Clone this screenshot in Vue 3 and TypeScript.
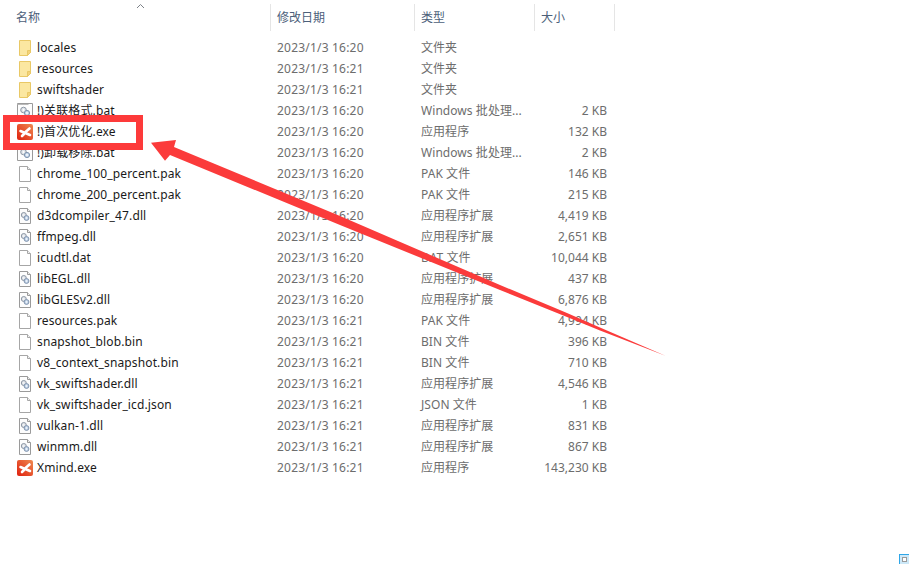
<script setup lang="ts">
type Kind = 'folder' | 'gear' | 'bat' | 'file' | 'xmind'
interface Row { name: string; date: string; type: string; size: string; kind: Kind }
const d0 = '2023/1/3 16:20'
const d1 = '2023/1/3 16:21'
const ext = '应用程序扩展'
const rows: Row[] = [
  { name: 'locales', date: d0, type: '文件夹', size: '', kind: 'folder' },
  { name: 'resources', date: d1, type: '文件夹', size: '', kind: 'folder' },
  { name: 'swiftshader', date: d1, type: '文件夹', size: '', kind: 'folder' },
  { name: '!)关联格式.bat', date: d0, type: 'Windows 批处理...', size: '2 KB', kind: 'bat' },
  { name: '!)首次优化.exe', date: d0, type: '应用程序', size: '132 KB', kind: 'xmind' },
  { name: '!)卸载移除.bat', date: d0, type: 'Windows 批处理...', size: '2 KB', kind: 'bat' },
  { name: 'chrome_100_percent.pak', date: d0, type: 'PAK 文件', size: '146 KB', kind: 'file' },
  { name: 'chrome_200_percent.pak', date: d0, type: 'PAK 文件', size: '215 KB', kind: 'file' },
  { name: 'd3dcompiler_47.dll', date: d0, type: ext, size: '4,419 KB', kind: 'gear' },
  { name: 'ffmpeg.dll', date: d0, type: ext, size: '2,651 KB', kind: 'gear' },
  { name: 'icudtl.dat', date: d0, type: 'DAT 文件', size: '10,044 KB', kind: 'file' },
  { name: 'libEGL.dll', date: d0, type: ext, size: '437 KB', kind: 'gear' },
  { name: 'libGLESv2.dll', date: d0, type: ext, size: '6,876 KB', kind: 'gear' },
  { name: 'resources.pak', date: d1, type: 'PAK 文件', size: '4,994 KB', kind: 'file' },
  { name: 'snapshot_blob.bin', date: d1, type: 'BIN 文件', size: '396 KB', kind: 'file' },
  { name: 'v8_context_snapshot.bin', date: d1, type: 'BIN 文件', size: '710 KB', kind: 'file' },
  { name: 'vk_swiftshader.dll', date: d1, type: ext, size: '4,546 KB', kind: 'gear' },
  { name: 'vk_swiftshader_icd.json', date: d1, type: 'JSON 文件', size: '1 KB', kind: 'file' },
  { name: 'vulkan-1.dll', date: d1, type: ext, size: '831 KB', kind: 'gear' },
  { name: 'winmm.dll', date: d1, type: ext, size: '867 KB', kind: 'gear' },
  { name: 'Xmind.exe', date: d1, type: '应用程序', size: '143,230 KB', kind: 'xmind' },
]
</script>

<template>
  <div class="explorer">
    <svg class="chevron" width="9" height="6" viewBox="0 0 9 6"><path d="M1 5 4.500 1.500 8 5" fill="none" stroke="#7c8187" stroke-width="1"/></svg>
    <div class="head">
      <div class="hcell first">名称</div>
      <div class="hcell">修改日期</div>
      <div class="hcell">类型</div>
      <div class="hcell">大小</div>
    </div>
    <div v-for="r in rows" :key="r.name" class="row">
      <div class="name">
        <svg class="icon" width="17" height="18" viewBox="0 0 17 18">
          <template v-if="r.kind === 'folder'">
            <path d="M2.500 1.500h11v12l-3 3h-8z" fill="#fbe7a1" stroke="#e9c866"/>
            <path d="M10.500 16.500v-5h3v2z" fill="#f3d27a" stroke="#e9c866"/>
          </template>
          <template v-else-if="r.kind === 'file'">
            <path d="M2.500 1.500h8l3 3v12h-11z" fill="#fff" stroke="#a6a6a6"/>
            <path d="M10.500 1.500v3h3" fill="#f3f3f3" stroke="#a6a6a6"/>
          </template>
          <template v-else-if="r.kind === 'gear'">
            <path d="M2.500 1.500h8l3 3v12h-11z" fill="#fdfdfd" stroke="#9a9a9a"/>
            <path d="M10.500 1.500v3h3" fill="#eee" stroke="#9a9a9a"/>
            <circle cx="6.800" cy="8" r="2.500" fill="#dfe3e8" stroke="#8e98a5"/>
            <circle cx="9.500" cy="11" r="2.400" fill="#c5d6ea" stroke="#7f93ad"/>
            <circle cx="6.800" cy="8" r="0.800" fill="#fff"/>
            <circle cx="9.500" cy="11" r="0.800" fill="#fff"/>
          </template>
          <template v-else-if="r.kind === 'bat'">
            <path d="M0.500 1.500h15v15h-15z" fill="#fdfdfd" stroke="#9a9a9a"/>
            <path d="M0.500 2.500h11" stroke="#b9b9b9"/>
            <circle cx="6.500" cy="8" r="2.800" fill="#dfe3e8" stroke="#8e98a5"/>
            <circle cx="10" cy="11" r="2.600" fill="#c5d6ea" stroke="#7f93ad"/>
            <circle cx="6.500" cy="8" r="0.900" fill="#fff"/>
            <circle cx="10" cy="11" r="0.900" fill="#fff"/>
          </template>
          <template v-else>
            <defs>
              <linearGradient :id="'xm' + r.name.length" x1="1" y1="0" x2="0" y2="1">
                <stop offset="0" stop-color="#ee8a50"/>
                <stop offset="1" stop-color="#e0200e"/>
              </linearGradient>
            </defs>
            <rect x="0" y="1" width="16" height="16" rx="2" :fill="'url(#xm' + r.name.length + ')'"/>
            <path d="M3.500 8 7 9.500M12.500 5.500 8.500 9M5 13l3-3M9.500 10.500l3.500 1.500" fill="none" stroke="#fff" stroke-width="2.600" stroke-linecap="round"/>
          </template>
        </svg>
        <span class="label">{{ r.name }}</span>
      </div>
      <div class="cell date">{{ r.date }}</div>
      <div class="cell type">{{ r.type }}</div>
      <div class="cell size">{{ r.size }}</div>
    </div>

    <div class="mark-box"></div>
    <svg class="arrow" width="909" height="564" viewBox="0 0 909 564">
      <path d="M151 142.700 176 140 174 147 340 216 500 285 567 313 600 327.500 666 356 600 330.500 567 317 500 290 340 225 170 155 165 160.700Z" fill="#fb3b3b"/>
    </svg>
    <div class="corner"><span class="corner-dot"></span></div>
  </div>
</template>

<style scoped>
.explorer {
  position: relative;
  width: 909px;
  height: 564px;
  overflow: hidden;
  background: #fff;
  font-family: "Noto Sans", "Noto Sans CJK SC", sans-serif;
  font-size: 12px;
  display: flow-root;
}
.chevron { position: absolute; left: 136px; top: 3px; }
.head {
  display: grid;
  grid-template-columns: 271px 144px 120px 80px;
  width: 615px;
  height: 27px;
  margin-top: 4px;
  margin-bottom: 6px;
}
.hcell {
  border-right: 1px solid #e5e5e5;
  padding-left: 6px;
  line-height: 27px;
  color: #4c607a;
}
.hcell.first { padding-left: 16px; }
.row {
  display: grid;
  grid-template-columns: 271px 144px 120px 80px;
  width: 615px;
  height: 21px;
  line-height: 21px;
}
.name {
  display: flex;
  align-items: center;
  padding-left: 17px;
  color: #1a1a1a;
  white-space: nowrap;
}
.label { letter-spacing: 0.13px; }
.icon { flex: none; margin-right: 3px; }
.cell { padding-left: 6px; color: #6d6d6d; white-space: nowrap; }
.date { letter-spacing: 0.2px; }
.type { letter-spacing: 0.06px; }
.size { padding: 0 8px 0 0; text-align: right; }
.mark-box {
  position: absolute;
  left: 3px;
  top: 115px;
  width: 140px;
  height: 35px;
  box-sizing: border-box;
  border: 7px solid #fd3a3a;
}
.arrow { position: absolute; left: 0; top: 0; }
.corner {
  position: absolute;
  left: 899px;
  top: 554px;
  width: 10px;
  height: 10px;
  box-sizing: border-box;
  background: #cce8f8;
  border-left: 1px solid #2ea6e8;
  border-top: 1px solid #2ea6e8;
}
.corner-dot {
  display: block;
  width: 5px;
  height: 5px;
  margin: 2px 0 0 2px;
  background: #fff;
  border: 1px solid #9a9a9a;
  box-sizing: border-box;
}
</style>
<style>
html, body { margin: 0; background: #fff; }
</style>
